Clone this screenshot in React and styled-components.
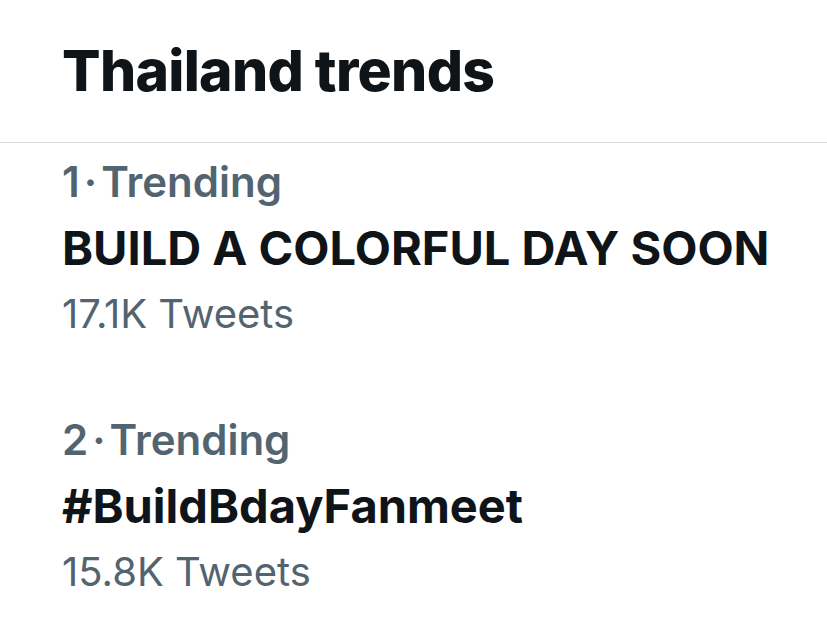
import React from "react";
import styled, { createGlobalStyle } from "styled-components";

const GlobalStyle = createGlobalStyle`
  html, body {
    margin: 0;
    padding: 0;
    background: #fff;
  }
  body {
    font-family: Inter, "Noto Sans", "Liberation Sans", sans-serif;
    -webkit-font-smoothing: antialiased;
  }
`;

const Panel = styled.div`
  width: 827px;
  height: 637px;
  overflow: hidden;
  background: #fff;
  display: flex;
  flex-direction: column;
`;

const Header = styled.div`
  flex-shrink: 0;
  height: 143px;
  padding: 0 62px;
  display: flex;
  align-items: flex-start;
  border-bottom: 1.5px solid #d9dde0;
  box-sizing: border-box;
`;

const Title = styled.h2`
  margin: 0;
  margin-top: 37px;
  font-size: 57px;
  font-weight: 800;
  line-height: 1.2;
  color: #0f1419;
  letter-spacing: -0.7px;
`;

const List = styled.div`
  flex-shrink: 0;
  display: flex;
  flex-direction: column;
  padding: 7px 0 0 62px;
  gap: 62px;
`;

const Trend = styled.div`
  display: flex;
  flex-direction: column;
  white-space: nowrap;
`;

const Meta = styled.div`
  font-size: 42px;
  font-weight: 600;
  color: #536471;
  line-height: 64px;
`;

const Dot = styled.span`
  margin: 0 4px;
`;

const Name = styled.div`
  font-size: 47px;
  font-weight: 700;
  color: #0f1419;
  line-height: 68px;
`;

const Count = styled.div`
  font-size: 40px;
  font-weight: 400;
  color: #536471;
  line-height: 64px;
`;

const trends = [
  { rank: 1, name: "BUILD A COLORFUL DAY SOON", count: "17.1K Tweets" },
  { rank: 2, name: "#BuildBdayFanmeet", count: "15.8K Tweets" },
];

export default function App() {
  return (
    <>
      <GlobalStyle />
      <Panel>
        <Header>
          <Title>Thailand trends</Title>
        </Header>
        <List>
          {trends.map((t) => (
            <Trend key={t.rank}>
              <Meta>
                {t.rank}
                <Dot>·</Dot>Trending
              </Meta>
              <Name>{t.name}</Name>
              <Count>{t.count}</Count>
            </Trend>
          ))}
        </List>
      </Panel>
    </>
  );
}
